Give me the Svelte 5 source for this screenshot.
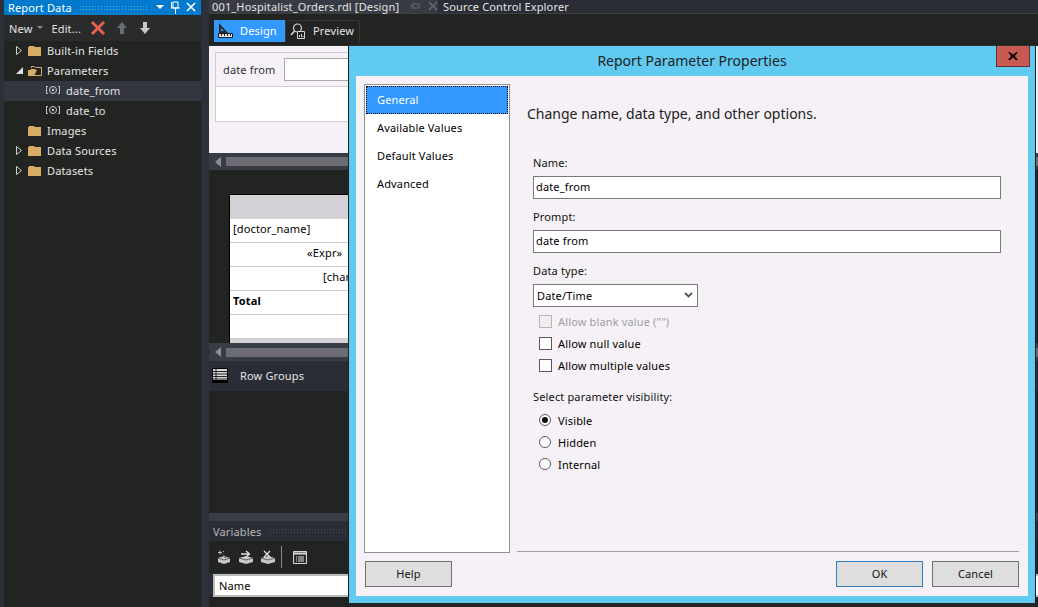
<script>
  const tree = [
    { label: 'Built-in Fields', arrow: 'closed', icon: 'folder' },
    { label: 'Parameters', arrow: 'open', icon: 'open' },
    { label: 'date_from', icon: 'param', selected: true },
    { label: 'date_to', icon: 'param' },
    { label: 'Images', icon: 'folder' },
    { label: 'Data Sources', arrow: 'closed', icon: 'folder' },
    { label: 'Datasets', arrow: 'closed', icon: 'folder' }
  ];
  const tabs = ['General', 'Available Values', 'Default Values', 'Advanced'];
</script>

<div class="ide">
  <aside class="report">
    <div class="panel-head">
      <span>Report Data</span>
      <i class="grip"></i>
      <svg width="46" height="14" viewBox="0 0 46 14" class="head-icons">
        <path d="M2 4h8l-4 4z" fill="#fff"/>
        <path d="M17.500 1v6M19 1h5v6h-5zM17 7h9M21.500 7v6" stroke="#fff" fill="none"/>
        <path d="M33 2l8 8M41 2l-8 8" stroke="#fff" stroke-width="1.600" fill="none"/>
      </svg>
    </div>
    <div class="panel-tools">
      <span>New</span>
      <svg width="6" height="4" viewBox="0 0 6 4"><path d="M0 0h6L3 3z" fill="#8a8d93"/></svg>
      <span class="edit">Edit...</span>
      <svg width="16" height="16" viewBox="0 0 16 16"><path d="M2 2l12 12M14 2L2 14" stroke="#e8604c" stroke-width="3" fill="none"/></svg>
      <svg class="up" width="12" height="14" viewBox="0 0 12 14"><path d="M6 1l5 6H8v6H4V7H1z" fill="#6c6f72"/></svg>
      <svg class="down" width="12" height="14" viewBox="0 0 12 14"><path d="M4 1h4v6h3l-5 6-5-6h3z" fill="#c8c8c8"/></svg>
    </div>
    <ul class="tree">
      {#each tree as row}
        <li class:selected={row.selected} class:leaf={row.icon === 'param'}>
          {#if row.icon === 'param'}
            <svg width="16" height="10" viewBox="0 0 16 10" class="param">
              <path d="M3 1.500H1.500v7H3M13 1.500h1.500v7H13" stroke="#c9c9c9" fill="none"/>
              <circle cx="8" cy="5" r="3.500" stroke="#c9c9c9" fill="none"/>
              <circle cx="8" cy="5" r="1.200" fill="#c9c9c9"/>
            </svg>
          {:else}
            <span class="arrow">
              {#if row.arrow === 'closed'}
                <svg width="6" height="9" viewBox="0 0 6 9"><path d="M.5.500l5 4-5 4z" fill="none" stroke="#d0d0d0"/></svg>
              {:else if row.arrow === 'open'}
                <svg width="7" height="7" viewBox="0 0 7 7"><path d="M7 0v7H0z" fill="#e0e0e0"/></svg>
              {/if}
            </span>
            {#if row.icon === 'folder'}
              <svg width="14" height="11" viewBox="0 0 14 11"><path d="M0 2h1V1h5l1 1h6v9H0z" fill="#d9ac68"/></svg>
            {:else}
              <svg width="14" height="11" viewBox="0 0 14 11"><path d="M3.500 3V1.500h3l1 1h6v8H2" fill="none" stroke="#d9ac68"/><path d="M0 11V5h2l1-1h4l1 1h1l-3 6z" fill="#d9ac68"/></svg>
            {/if}
          {/if}
          <span class="label">{row.label}</span>
        </li>
      {/each}
    </ul>
  </aside>

  <main class="work">
    <div class="doc-tabs">
      <div class="doc-tab active">
        <span>001_Hospitalist_Orders.rdl [Design]</span>
        <svg width="12" height="10" viewBox="0 0 12 10"><path d="M1 5h3M4 2v6M4 3h6v4H4" stroke="#666a72" fill="none"/></svg>
        <svg width="10" height="10" viewBox="0 0 10 10"><path d="M1 1l8 8M9 1L1 9" stroke="#666a72" stroke-width="1.600"/></svg>
      </div>
      <div class="doc-tab"><span>Source Control Explorer</span></div>
    </div>
    <div class="mode-bar">
      <div class="mode on">
        <svg width="15" height="15" viewBox="0 0 15 15"><path d="M1 0v10h9zM3 5v3h3z" fill="#2a2a2a" fill-rule="evenodd"/><path d="M.5 10.500h14v4H.5z" fill="#e8e8e8" stroke="#1c1c1c"/><path d="M3.500 11v2M6.500 11v2M9.500 11v2M12.500 11v2" stroke="#1c1c1c"/></svg>
        <span>Design</span>
      </div>
      <div class="mode">
        <svg width="15" height="16" viewBox="0 0 15 16"><circle cx="7.500" cy="5" r="4" fill="none" stroke="#d6d6d6" stroke-width="1.200"/><path d="M4.500 8L1 12" stroke="#d6d6d6" stroke-width="1.500"/><path d="M7.500 8.500h7v7h-7z" fill="#222421" stroke="#d6d6d6"/><path d="M9.500 14v-2M11.500 14v-3M13 14v-1" stroke="#d6d6d6"/></svg>
        <span>Preview</span>
      </div>
    </div>

    <section class="preview">
      <div class="prompt-box">
        <div class="prompt-row">
          <span>date from</span>
          <i class="prompt-input"></i>
        </div>
        <div class="prompt-blank"></div>
      </div>
    </section>
    <div class="hscroll"><b></b><i></i></div>

    <section class="surface">
      <div class="report-table">
        <div class="cell head"></div>
        <div class="cell">[doctor_name]</div>
        <div class="cell expr">«Expr»</div>
        <div class="cell chart">[chart]</div>
        <div class="cell total">Total</div>
        <div class="cell blank"></div>
        <div class="cell foot"></div>
      </div>
    </section>
    <div class="hscroll low"><b></b><i></i></div>

    <div class="groups">
      <svg width="16" height="15" viewBox="0 0 16 15"><path d="M0 0h16v15H0z" fill="#000"/><path d="M1 1h14v11H1z" fill="#d8d8d8"/><path d="M4 1v11M1 3.500h14M1 6h14M1 8.500h14M1 11h14" stroke="#222"/></svg>
      <span>Row Groups</span>
    </div>
    <section class="groups-space"></section>

    <div class="splitter"></div>
    <div class="vars-head"><span>Variables</span><i class="grip dim"></i></div>
    <div class="vars-tools">
      <svg width="16" height="15" viewBox="0 0 16 15"><path d="M2 8l6-2 6 2v4l-6 2-6-2z" fill="#c8c8c8"/><path d="M8 7.500l6-1.500M2 8l6 2 6-2" stroke="#333" fill="none" stroke-width=".7"/><path d="M2 2.500h4M4 .5v4M7 1l1 1M7 4.500l1 1" stroke="#bdbdbd"/></svg>
      <svg width="16" height="15" viewBox="0 0 16 15"><path d="M1 8l7-2 7 2v4l-7 2-7-2z" fill="#c8c8c8"/><path d="M1 8l7 2 7-2" stroke="#333" fill="none" stroke-width=".7"/><path d="M3 4h8M8 1l3.500 3L8 7" stroke="#e0e0e0" stroke-width="1.300" fill="none"/></svg>
      <svg width="16" height="15" viewBox="0 0 16 15"><path d="M1 8l7-2 7 2v4l-7 2-7-2z" fill="#c8c8c8"/><path d="M1 8l7 2 7-2" stroke="#333" fill="none" stroke-width=".7"/><path d="M4 1l6 6M10 1L4 7" stroke="#e0e0e0" stroke-width="1.300"/></svg>
      <i class="sep"></i>
      <svg width="14" height="13" viewBox="0 0 14 13"><path d="M.5.500h13v12H.5z" fill="#2a2c2c" stroke="#d8d8d8"/><path d="M1 2.500h12" stroke="#d8d8d8" stroke-width="2"/><path d="M3 6h1M5 6h6M3 8h1M5 8h6M3 10h1M5 10h6" stroke="#d8d8d8"/></svg>
    </div>
    <div class="vars-grid"><span>Name</span></div>
    <div class="vars-rest"></div>
  </main>

  <div class="dialog" role="dialog" aria-label="Report Parameter Properties">
    <header class="title">
      <span>Report Parameter Properties</span>
      <button class="close" aria-label="Close">
        <svg width="10" height="8" viewBox="0 0 10 8"><path d="M1 0l4 3 4-3h.5L6.500 4l3 4H8L5 5 2 8H.5l3-4L.5 0z" fill="#000" stroke="#000" stroke-width=".6"/></svg>
      </button>
    </header>
    <div class="dialog-body">
      <div class="dialog-main">
        <nav class="side">
          {#each tabs as t, i}
            <div class="side-item" class:current={i === 0}>{t}</div>
          {/each}
        </nav>
        <div class="form">
          <h2>Change name, data type, and other options.</h2>
          <div class="fields">
            <label class="f-label" for="n">Name:</label>
            <input id="n" class="text" value="date_from" />
            <label class="f-label second" for="p">Prompt:</label>
            <input id="p" class="text" value="date from" />
            <div class="f-label second">Data type:</div>
            <div class="select">
              <span>Date/Time</span>
              <svg width="9" height="6" viewBox="0 0 9 6"><path d="M1 1l3.500 3.500L8 1" fill="none" stroke="#555" stroke-width="1.800"/></svg>
            </div>
            <div class="checks">
              <div class="check disabled"><i></i><span>Allow blank value ("")</span></div>
              <div class="check"><i></i><span>Allow null value</span></div>
              <div class="check"><i></i><span>Allow multiple values</span></div>
            </div>
            <div class="f-label vis">Select parameter visibility:</div>
            <div class="radios">
              <div class="radio on"><i></i><span>Visible</span></div>
              <div class="radio"><i></i><span>Hidden</span></div>
              <div class="radio"><i></i><span>Internal</span></div>
            </div>
          </div>
        </div>
      </div>
      <footer class="foot-row">
        <button class="btn">Help</button>
        <span class="spacer"></span>
        <button class="btn primary">OK</button>
        <button class="btn">Cancel</button>
      </footer>
    </div>
  </div>
</div>

<style>
  :global(body) { margin: 0; background: #2c3038; }
  * { box-sizing: border-box; }
  .ide {
    position: relative; width: 1038px; height: 607px; overflow: hidden;
    display: flex; background: #2c3038; color: #e4e4e4;
    font: 11px/1 "Noto Sans", sans-serif; letter-spacing: .15px;
  }
  svg { display: block; flex: none; }
  .report { width: 197px; margin-left: 4px; display: flex; flex-direction: column; background: #222421; }
  .panel-head { height: 15px; background: #007acc; display: flex; align-items: center; padding-left: 4px; color: #fff; }
  .grip {
    flex: 1; height: 6px; margin: 0 6px 0 7px;
    background-image: radial-gradient(#5aaee0 .6px, transparent .7px);
    background-size: 3px 3px;
  }
  .grip.dim { background-image: radial-gradient(#4d5058 .6px, transparent .7px); margin-right: 0; }
  .head-icons { margin-right: 1px; }
  .panel-tools { height: 26px; display: flex; align-items: center; background: #2a2b2d; padding-left: 5px; }
  .panel-tools svg:nth-of-type(1) { margin-left: 5px; }
  .edit { margin-left: 8px; }
  .panel-tools svg:nth-of-type(2) { margin-left: 9px; }
  .up { margin-left: 10px; }
  .down { margin-left: 11px; }
  .tree { list-style: none; margin: 0; padding: 0; }
  .tree li { height: 20px; display: flex; align-items: center; padding: 0 0 2px 12px; }
  .tree li.leaf { padding-left: 41px; }
  .tree li.selected { background: #33363f; }
  .arrow { width: 12px; display: flex; justify-content: flex-start; }
  .tree .label { margin-left: 5px; }

  .work { flex: 1; min-width: 0; display: flex; flex-direction: column; margin-left: 8px; }
  .doc-tabs { height: 14px; display: flex; background: #2a2d35; border-bottom: 1px solid #3d3f47; white-space: nowrap; }
  .doc-tab { display: flex; align-items: center; padding: 0 0 1px 3px; height: 13px; }
  .doc-tab.active { width: 229px; background: #383b44; }
  .doc-tab.active svg:first-of-type { margin-left: 10px; }
  .doc-tab.active svg:last-of-type { margin-left: 7px; }
  .doc-tab:not(.active) { padding-left: 5px; }
  .mode-bar { height: 32px; background: #222421; display: flex; align-items: flex-start; padding: 6px 0 0 5px; border-bottom: 1px solid #2c2e2e; }
  .mode { height: 22px; display: flex; align-items: center; padding: 0 0 2px 4px; }
  .mode.on { background: #3399ff; color: #fff; width: 71px; gap: 7px; }
  .mode:not(.on) { border: 1px solid #35373a; border-bottom: 0; border-radius: 2px 2px 0 0; width: 75px; gap: 8px; }

  .preview { height: 107px; background: #f5f1f6; padding: 6px 6px 0; }
  .prompt-box { border: 1px solid #d0ced2; height: 70px; width: 400px; background: #fff; }
  .prompt-row { height: 34px; background: #f5f1f6; display: flex; align-items: center; padding-left: 7px; gap: 9px; color: #333; border-bottom: 1px solid #d0ced2; }
  .prompt-input { display: block; width: 140px; height: 23px; background: #fff; border: 1px solid #aaa; }
  .prompt-blank { height: 33px; background: #fff; }
  .hscroll { height: 17px; background: #383c45; display: flex; align-items: center; padding-left: 6px; gap: 5px; }
  .hscroll b { width: 0; height: 0; border: 5px solid transparent; border-left: 0; border-right: 6px solid #8b8d92; }
  .hscroll i { flex: 1; height: 9px; background: #6d6c72; }
  .surface { height: 173px; background: #222421; padding: 24px 0 0 20px; overflow: hidden; }
  .report-table { width: 300px; background: #fff; border-left: 1px solid #000; border-top: 1px solid #000; color: #000; }
  .cell { height: 24px; border-bottom: 1px solid #ccc; padding: 0 0 5px 3px; display: flex; align-items: center; }
  .cell.head { background: #d4d2d6; border: 0; }
  .cell.expr { padding-left: 77px; }
  .cell.chart { padding-left: 93px; }
  .cell.total { font-weight: 700; }
  .cell.foot { background: #d4d2d6; border: 0; height: 5px; padding: 0; }
  .hscroll.low { height: 18px; }
  .groups { height: 30px; background: #2a2d35; display: flex; align-items: center; padding: 0 0 2px 3px; gap: 12px; }
  .groups-space { height: 122px; background: #222421; }
  .splitter { height: 8px; background: #3a3d46; }
  .vars-head { height: 20px; background: #2a2d35; display: flex; align-items: center; padding-left: 4px; color: #b8b8b8; }
  .vars-tools { height: 32px; background: #222421; display: flex; align-items: center; padding-left: 7px; gap: 6px; }
  .sep { width: 1px; height: 22px; background: #8a8a8a; margin: 0 5px 0 -1px; }
  .vars-grid { height: 23px; margin: 1px 0 0 4px; background: #fff; border: 2px solid #bbb; border-right: 0; color: #000; display: flex; align-items: center; padding-left: 4px; }
  .vars-rest { flex: 1; background: #222421; }

  .dialog {
    position: absolute; left: 348px; top: 46px; width: 688px; height: 557px;
    background: #61caf0; border-left: 1px solid #1c1c1c; border-right: 1px solid #1c1c1c;
    display: flex; flex-direction: column; padding: 0 7px 7px 7px; color: #000;
  }
  .title { height: 30px; display: flex; align-items: center; justify-content: center; position: relative; font-size: 14px; color: #222; letter-spacing: 0; }
  .close {
    position: absolute; right: -2px; top: 0; width: 34px; height: 21px; padding: 0;
    background: #c75a52; border: 1px solid #6b2f2b; border-top: 0;
    display: flex; align-items: center; justify-content: center;
  }
  .dialog-body { flex: 1; background: #f5f1f6; display: flex; flex-direction: column; padding: 8px 9px 9px 8px; }
  .dialog-main { flex: 1; display: flex; min-height: 0; }
  .side { width: 146px; background: #fff; border: 1px solid #8e8e9c; padding: 1px; }
  .side-item { height: 28px; display: flex; align-items: center; padding: 0 0 2px 11px; }
  .side-item.current { background: #3399ff; color: #fff; outline: 1px dotted #000; outline-offset: -1px; }
  .form { flex: 1; margin: 0 0 1px 7px; border-bottom: 1px solid #a0a0a0; padding: 0 0 0 10px; }
  .form h2 { margin: 22px 0 0; font: 400 14px/16px "Noto Sans", sans-serif; color: #222; letter-spacing: 0; }
  .fields { margin: 34px 18px 0 6px; display: flex; flex-direction: column; }
  .f-label { height: 14px; line-height: 14px; margin-bottom: 6px; color: #111; display: block; }
  .f-label.second { margin-top: 11px; }
  .text { height: 23px; border: 1px solid #7a7a7a; background: #fff; padding: 0 2px 2px; font: inherit; letter-spacing: inherit; color: #000; outline: 0; width: 100%; }
  .select { width: 165px; height: 23px; border: 1px solid #7a7a7a; background: #fff; display: flex; align-items: center; justify-content: space-between; padding: 0 4px 1px 3px; }
  .checks { margin-top: 4px; display: flex; flex-direction: column; padding-left: 6px; }
  .check { height: 22px; display: flex; align-items: center; gap: 6px; padding-bottom: 2px; }
  .check i { width: 13px; height: 13px; background: #fff; border: 1px solid #5a5a5a; }
  .check.disabled { color: #a0a0a0; }
  .check.disabled i { border-color: #b4b4b4; background: #f0edf1; }
  .vis { margin: 13px 0 6px; }
  .radios { display: flex; flex-direction: column; padding-left: 6px; }
  .radio { height: 22px; display: flex; align-items: center; gap: 7px; padding-bottom: 2px; }
  .radio i { width: 12px; height: 12px; border-radius: 50%; border: 1px solid #5a5a5a; background: #fff; position: relative; }
  .radio.on i::after { content: ""; position: absolute; left: 2px; top: 2px; width: 6px; height: 6px; border-radius: 50%; background: #111; }
  .foot-row { height: 26px; margin-top: 8px; display: flex; align-items: stretch; gap: 9px; padding-left: 1px; }
  .spacer { flex: 1; }
  .btn { width: 87px; height: 26px; background: #dedede; border: 1px solid #707070; font: inherit; letter-spacing: inherit; color: #111; padding: 0 0 2px; }
  .btn.primary { border-color: #2f7fc0; }
</style>
